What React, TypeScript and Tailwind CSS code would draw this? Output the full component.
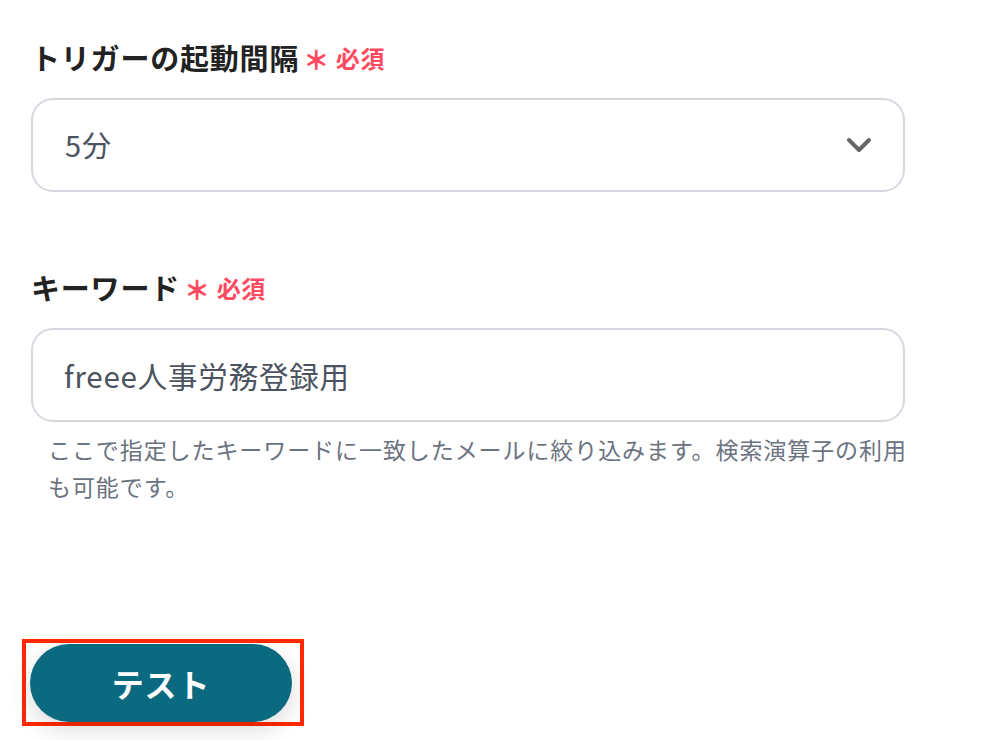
import React from 'react';

const font = { fontFamily: '"Noto Sans CJK JP", "Noto Sans", sans-serif' };

function Required() {
  return (
    <span className="ml-[4px] inline-flex items-center text-[24px] font-bold text-[#ff4a5f] tracking-wide">
      <span className="mr-[6px] text-[26px] font-black">＊</span>
      必須
    </span>
  );
}

export default function App() {
  return (
    <div className="w-[1004px] h-[740px] bg-white overflow-hidden tracking-wider" style={font}>
      <div className="pl-[31px] pt-[37px] w-[905px]">
        {/* トリガーの起動間隔 */}
        <div className="flex items-center h-[42px] text-[29px] font-bold text-[#222]">
          トリガーの起動間隔
          <Required />
        </div>
        <div className="mt-[19px] h-[94px] w-[874px] rounded-[22px] border-2 border-[#d5d8de] flex items-center justify-between pl-[32px] pr-[31px]">
          <span className="text-[29px] text-[#4b5260]">5分</span>
          <svg width="26" height="18" viewBox="0 0 26 18" fill="none">
            <path d="M3 4l10 10L23 4" stroke="#666" strokeWidth="4" strokeLinecap="round" strokeLinejoin="round" />
          </svg>
        </div>

        {/* キーワード */}
        <div className="mt-[75px] flex items-center h-[42px] text-[29px] font-bold text-[#222]">
          キーワード
          <Required />
        </div>
        <div className="mt-[19px] h-[94px] w-[874px] rounded-[22px] border-2 border-[#d5d8de] flex items-center pl-[31px]">
          <span className="text-[29.5px] text-[#4b5260]">freee人事労務登録用</span>
        </div>
        <p className="mt-[9px] pl-[17px] text-[23px] leading-[37px] text-[#6b7280] whitespace-nowrap tracking-[0.04em]">
          ここで指定したキーワードに一致したメールに絞り込みます。検索演算子の利用
          <br />
          も可能です。
        </p>

        {/* テスト */}
        <div className="mt-[134px] -ml-[9px] inline-block border-4 border-[#ff2a00] pt-[1px] pl-[4px] pr-[8px]">
          <button className="w-[262px] h-[78px] rounded-full bg-[#0c6a80] text-white text-[32px] font-bold shadow-[0_8px_24px_rgba(0,0,0,0.14)]">
            テスト
          </button>
        </div>
      </div>
    </div>
  );
}
